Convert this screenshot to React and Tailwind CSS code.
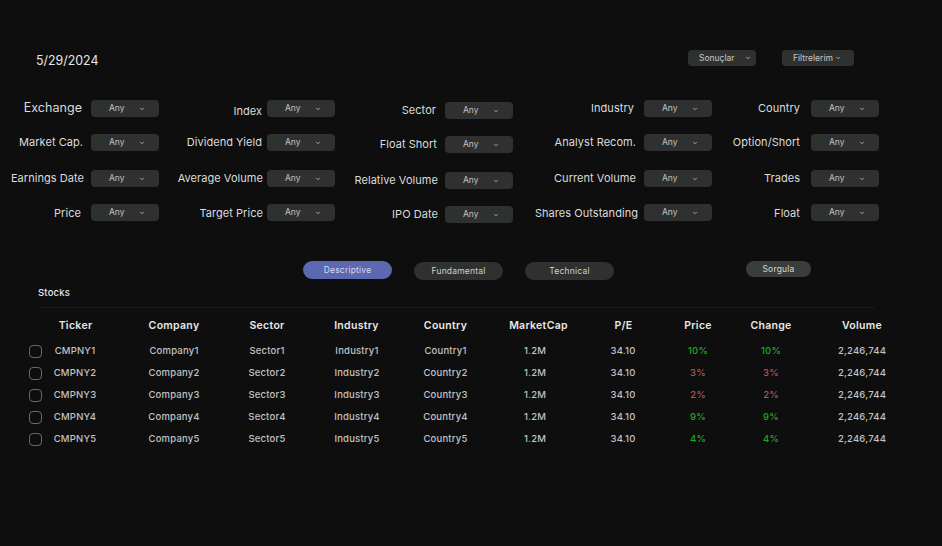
import React from "react";
import { ChevronDown } from "lucide-react";

const rowMt = ["", "mt-[17px]", "mt-[19px]", "mt-[17px]"];

const columns = [
  { w: "w-[159px]", top: "", items: [
    ["Exchange", "text-[12.5px] mr-[9px] mb-[1px]"],
    ["Market Cap.", "mr-[8px] mb-[1px]"],
    ["Earnings Date", "mr-[7px] mb-[1px]"],
    ["Price", "mr-[10px] mt-[2px]"],
  ]},
  { w: "w-[176px]", top: "", items: [
    ["Index", "mr-[5px] mt-[6px]"],
    ["Dividend Yield", "mr-[5px] mb-[1px]"],
    ["Average Volume", "mr-[4px] mb-[1px]"],
    ["Target Price", "mr-[4px] mt-[2px]"],
  ]},
  { w: "w-[178px]", top: "mt-[2px]", items: [
    ["Sector", "mr-[9px] mb-[1px]"],
    ["Float Short", "mr-[8px] mb-[1px]"],
    ["Relative Volume", "mr-[7px] mb-[1px]"],
    ["IPO Date", "mr-[7px]"],
  ]},
  { w: "w-[199px]", top: "", items: [
    ["Industry", "mr-[10px] mb-[1px]"],
    ["Analyst Recom.", "mr-[8px] mb-[1px]"],
    ["Current Volume", "mr-[8px] mb-[1px]"],
    ["Shares Outstanding", "mr-[6px] mt-[2px]"],
  ]},
  { w: "w-[167px]", top: "", items: [
    ["Country", "mr-[11px] mb-[1px]"],
    ["Option/Short", "mr-[11px] mb-[1px]"],
    ["Trades", "mr-[11px] mb-[1px]"],
    ["Float", "mr-[11px] mt-[2px]"],
  ]},
];

const headerCols = [
  ["Ticker", "w-[65px]"],
  ["Company", "w-[132px]"],
  ["Sector", "w-[54px]"],
  ["Industry", "w-[125px]"],
  ["Country", "w-[53px]"],
  ["MarketCap", "w-[133px]"],
  ["P/E", "w-[37px]"],
  ["Price", "w-[112px]"],
  ["Change", "w-[34px]"],
  ["Volume", "w-[148px]"],
];

const cellW = ["w-[64px]", "w-[134px]", "w-[52px]", "w-[128px]", "w-[49px]", "w-[130px]", "w-[46px]", "w-[104px]", "w-[42px]", "w-[140px]"];

const rows = [
  [1, "10%", true],
  [2, "3%", false],
  [3, "2%", false],
  [4, "9%", true],
  [5, "4%", true],
];

function Select({ className = "" }) {
  return (
    <div className={`w-[68px] h-[17px] rounded-[4px] bg-[#2f3030] flex items-center text-[8.5px] text-[#c4c4c4] ${className}`}>
      <span className="ml-[18px] w-[28px]">Any</span>
      <ChevronDown size={6} strokeWidth={3} className="ml-[2px] text-[#c8c8c8]" />
    </div>
  );
}

function Tab({ children, className = "" }) {
  return (
    <div className={`w-[89px] h-[18px] rounded-full flex items-center justify-center text-[8.5px] tracking-[0.2px] ${className}`}>
      {children}
    </div>
  );
}

function Cell({ w, className = "", children }) {
  return <div className={`${w} flex justify-center whitespace-nowrap ${className}`}>{children}</div>;
}

export default function App() {
  return (
    <div className="w-[942px] h-[546px] overflow-hidden bg-[#0e0e0f] font-['Inter',sans-serif] text-white">
      <div className="flex items-start pt-[50px] h-[100px]">
        <div className="ml-[36px] w-[62px] mt-[3px] text-[12.4px] leading-[16px] whitespace-nowrap text-[#e6e6e6]">5/29/2024</div>
        <div className="ml-[590px] w-[68px] h-[16px] rounded-[4px] bg-[#2f3030] flex items-center text-[8.5px] text-[#c8c8c8]">
          <span className="ml-[11px] w-[39px] whitespace-nowrap">Sonuçlar</span>
          <ChevronDown size={6} strokeWidth={3} className="ml-[7px]" />
        </div>
        <div className="ml-[26px] w-[72px] h-[16px] rounded-[4px] bg-[#2f3030] flex items-center text-[8.5px] text-[#c8c8c8]">
          <span className="ml-[11px] whitespace-nowrap">Filtrelerim</span>
          <ChevronDown size={6} strokeWidth={3} className="ml-[2px]" />
        </div>
      </div>

      <div className="flex h-[161px] items-start">
        {columns.map((col, c) => (
          <div key={c} className={`${col.w} ${col.top} shrink-0 flex flex-col`}>
            {col.items.map(([label, cls], i) => (
              <div key={label} className={`h-[17px] flex items-center justify-end ${rowMt[i]}`}>
                <span className={`whitespace-nowrap text-[11px] tracking-[0.05px] text-[#dcdcdc] ${cls}`}>{label}</span>
                <Select className="shrink-0" />
              </div>
            ))}
          </div>
        ))}
      </div>

      <div className="flex items-start h-[40px]">
        <Tab className="ml-[303px] bg-[#5c68b0] text-[#d4d8ee]">Descriptive</Tab>
        <Tab className="ml-[22px] mt-[1px] bg-[#2f3030] text-[#d0d0d0]">Fundamental</Tab>
        <Tab className="ml-[22px] mt-[1px] bg-[#2f3030] text-[#d0d0d0]">Technical</Tab>
        <div className="ml-[132px] w-[65px] h-[16px] rounded-full bg-[#3a3d3a] flex items-center justify-center text-[8.5px] tracking-[0.2px] text-[#d8d8d8]">Sorgula</div>
      </div>

      <div className="-mt-[15px] ml-[38px] h-[15px] flex items-center text-[9.5px] font-medium tracking-[0.2px] text-[#e4e4e4]">Stocks</div>
      <div className="ml-[40px] mt-[6px] w-[835px] h-px bg-[#191a1b]" />

      <div className="flex pl-[43px] mt-[11px] h-[14px] items-center text-[10.5px] font-semibold tracking-[0.3px] text-[#e8e8e8]">
        {headerCols.map(([t, w]) => (
          <Cell key={t} w={w}>{t}</Cell>
        ))}
      </div>

      <div className="mt-[7.5px] flex flex-col text-[9.5px] font-medium tracking-[0.2px] text-[#c2c2c2]">
        {rows.map(([n, pct, up]) => {
          const vals = [`CMPNY${n}`, `Company${n}`, `Sector${n}`, `Industry${n}`, `Country${n}`, "1.2M", "34.10"];
          const colour = up ? "text-[#1fa81f]" : "text-[#ad5555]";
          return (
            <div key={n} className="flex items-center h-[22px]">
              <div className="ml-[29px] w-[13px] h-[13px] rounded-[4px] border border-[#6a6a6a] shrink-0" />
              <div className="w-[1px] shrink-0" />
              {vals.map((v, i) => (
                <Cell key={i} w={cellW[i]}>{v}</Cell>
              ))}
              <Cell w={cellW[7]} className={colour}>{pct}</Cell>
              <Cell w={cellW[8]} className={colour}>{pct}</Cell>
              <Cell w={cellW[9]}>2,246,744</Cell>
            </div>
          );
        })}
      </div>
    </div>
  );
}
